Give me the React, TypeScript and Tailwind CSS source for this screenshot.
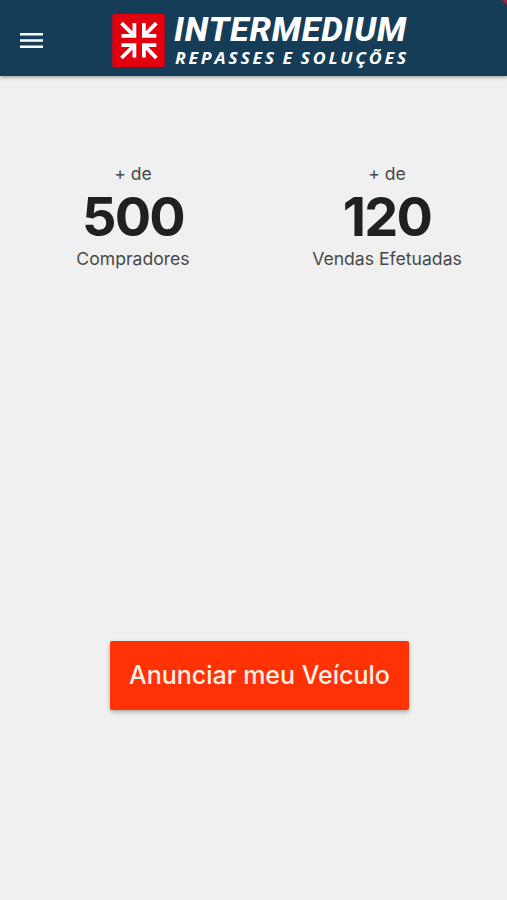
const stats = [
    { value: "500", label: "Compradores" },
    { value: "120", label: "Vendas Efetuadas" },
];

const Logo: React.FC = () => {
    return (
        <svg width="300" height="60" viewBox="0 0 300 60" role="img" aria-label="Intermedium">
            <rect x="2.3" y="6" width="52.5" height="53" rx="2" fill="#e2000f" />
            <g fill="none" stroke="#fff" strokeWidth="3.8">
                <path d="M11.5 15.2 L24 27.5 M24.4 15 V27.8 H11.5" />
                <path d="M46.3 15.2 L34.3 27.5 M33.9 15 V27.8 H46.3" />
                <path d="M11.5 50 L24 37.5 M24.4 49.5 V37.2 H11.5" />
                <path d="M46.3 50 L34.3 37.5 M33.9 49.5 V37.2 H46.3" />
            </g>
            <text x="64" y="33" textLength="233" lengthAdjust="spacingAndGlyphs" letterSpacing="0.8" fill="#fff" fontFamily="Roboto, sans-serif" fontWeight="800" fontStyle="italic" fontSize="32.5">INTERMEDIUM</text>
            <text x="65" y="56" textLength="234" lengthAdjust="spacingAndGlyphs" letterSpacing="2.4" wordSpacing="-1.5" fill="#fff" fontFamily="'Open Sans', sans-serif" fontWeight="700" fontStyle="italic" fontSize="15.5">REPASSES E SOLUÇÕES</text>
        </svg>
    )
};

const App: React.FC = () => {
    return (
        <div className="w-full h-screen bg-[#f0f0f0] font-['Inter',sans-serif] flex flex-col overflow-hidden">
            <header className="relative h-[76px] shrink-0 bg-[#163d57] shadow-[0_1px_4px_rgba(0,0,0,0.4)] flex items-start">
                <svg className="ml-[19.5px] mt-8" width="23" height="17" viewBox="0 0 23 17" stroke="#fff" strokeWidth="2.6">
                    <path d="M0 2.2H23M0 8.5H23M0 14.8H23" />
                </svg>
                <div className="ml-[67.5px] mt-2"><Logo /></div>
                <svg className="absolute right-0 top-0" width="5" height="5" viewBox="0 0 5 5">
                    <path d="M0 0H5V5Z" fill="#a8213c" />
                </svg>
            </header>
            <div className="flex mt-[86px] pl-[6px] text-center text-[#484848]">
                {stats.map((stat) => (
                    <div key={stat.label} className="flex flex-col items-center w-[254px] shrink-0">
                        <p className="text-[17.6px] leading-6">+ de</p>
                        <p className="text-[54px] leading-[61px] tracking-[-1.8px] font-bold text-[#202020]">{stat.value}</p>
                        <p className="text-[17.6px] leading-6">{stat.label}</p>
                    </div>
                ))}
            </div>
            <button className="ml-[110px] mt-[370px] w-[299px] h-[69px] shrink-0 bg-[#ff3205] text-[#fff0e8] text-[25px] font-medium rounded-xs shadow-[0_2px_4px_rgba(0,0,0,0.3)]">
                Anunciar meu Veículo
            </button>
        </div>
    )
};

export default App;
